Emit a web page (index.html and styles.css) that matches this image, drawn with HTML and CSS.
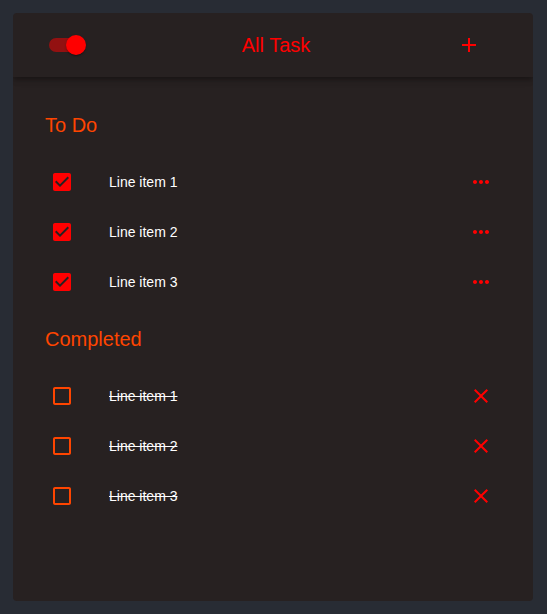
FILE: index.html
```html
<!DOCTYPE html>
<html lang="en">
<head>
<meta charset="utf-8">
<title>All Task</title>
<link rel="stylesheet" href="styles.css">
</head>
<body>
<div class="card">
  <header class="bar">
    <div class="switch"><span class="knob"></span></div>
    <div class="title">All Task</div>
    <svg class="icon red add" viewBox="0 0 24 24"><path d="M19 13h-6v6h-2v-6H5v-2h6V5h2v6h6v2z"/></svg>
  </header>
  <main class="content">
    <section class="section">
      <h2 class="heading">To Do</h2>
      <div class="row">
        <svg class="icon red" viewBox="0 0 24 24"><path d="M19 3H5c-1.11 0-2 .9-2 2v14c0 1.1.89 2 2 2h14c1.110 0 2-.9 2-2V5c0-1.1-.89-2-2-2zm-9 14l-5-5 1.41-1.41L10 14.170l7.59-7.59L19 8l-9 9z"/></svg>
        <span class="label">Line item 1</span>
        <svg class="icon red" viewBox="0 0 24 24"><path d="M6 10c-1.1 0-2 .9-2 2s.9 2 2 2 2-.9 2-2-.9-2-2-2zm12 0c-1.1 0-2 .9-2 2s.9 2 2 2 2-.9 2-2-.9-2-2-2zm-6 0c-1.1 0-2 .9-2 2s.9 2 2 2 2-.9 2-2-.9-2-2-2z"/></svg>
      </div>
      <div class="row">
        <svg class="icon red" viewBox="0 0 24 24"><path d="M19 3H5c-1.11 0-2 .9-2 2v14c0 1.1.89 2 2 2h14c1.11 0 2-.9 2-2V5c0-1.1-.89-2-2-2zm-9 14l-5-5 1.41-1.41L10 14.17l7.59-7.59L19 8l-9 9z"/></svg>
        <span class="label">Line item 2</span>
        <svg class="icon red" viewBox="0 0 24 24"><path d="M6 10c-1.1 0-2 .9-2 2s.9 2 2 2 2-.9 2-2-.9-2-2-2zm12 0c-1.1 0-2 .9-2 2s.9 2 2 2 2-.9 2-2-.9-2-2-2zm-6 0c-1.1 0-2 .9-2 2s.9 2 2 2 2-.9 2-2-.9-2-2-2z"/></svg>
      </div>
      <div class="row">
        <svg class="icon red" viewBox="0 0 24 24"><path d="M19 3H5c-1.11 0-2 .9-2 2v14c0 1.1.89 2 2 2h14c1.11 0 2-.9 2-2V5c0-1.1-.89-2-2-2zm-9 14l-5-5 1.41-1.41L10 14.17l7.59-7.59L19 8l-9 9z"/></svg>
        <span class="label">Line item 3</span>
        <svg class="icon red" viewBox="0 0 24 24"><path d="M6 10c-1.1 0-2 .9-2 2s.9 2 2 2 2-.9 2-2-.9-2-2-2zm12 0c-1.1 0-2 .9-2 2s.9 2 2 2 2-.9 2-2-.9-2-2-2zm-6 0c-1.1 0-2 .9-2 2s.9 2 2 2 2-.9 2-2-.9-2-2-2z"/></svg>
      </div>
    </section>
    <section class="section">
      <h2 class="heading">Completed</h2>
      <div class="row">
        <svg class="icon orange" viewBox="0 0 24 24"><path d="M19 5v14H5V5h14m0-2H5c-1.1 0-2 .9-2 2v14c0 1.1.9 2 2 2h14c1.1 0 2-.9 2-2V5c0-1.1-.9-2-2-2z"/></svg>
        <span class="label done">Line item 1</span>
        <svg class="icon red" viewBox="0 0 24 24"><path d="M19 6.41L17.59 5 12 10.59 6.41 5 5 6.41 10.59 12 5 17.59 6.41 19 12 13.41 17.59 19 19 17.59 13.41 12z"/></svg>
      </div>
      <div class="row">
        <svg class="icon orange" viewBox="0 0 24 24"><path d="M19 5v14H5V5h14m0-2H5c-1.1 0-2 .9-2 2v14c0 1.1.9 2 2 2h14c1.1 0 2-.9 2-2V5c0-1.1-.9-2-2-2z"/></svg>
        <span class="label done">Line item 2</span>
        <svg class="icon red" viewBox="0 0 24 24"><path d="M19 6.41L17.59 5 12 10.59 6.41 5 5 6.41 10.59 12 5 17.59 6.41 19 12 13.41 17.59 19 19 17.59 13.41 12z"/></svg>
      </div>
      <div class="row">
        <svg class="icon orange" viewBox="0 0 24 24"><path d="M19 5v14H5V5h14m0-2H5c-1.1 0-2 .9-2 2v14c0 1.1.9 2 2 2h14c1.1 0 2-.9 2-2V5c0-1.1-.9-2-2-2z"/></svg>
        <span class="label done">Line item 3</span>
        <svg class="icon red" viewBox="0 0 24 24"><path d="M19 6.41L17.59 5 12 10.59 6.41 5 5 6.41 10.59 12 5 17.59 6.41 19 12 13.41 17.59 19 19 17.59 13.41 12z"/></svg>
      </div>
    </section>
  </main>
</div>
</body>
</html>
```
FILE: styles.css
```css
html, body {
  margin: 0;
  padding: 0;
}
body {
  background: #282c34;
  padding: 13px 14px 13px 13px;
  font-family: "Liberation Sans", Arial, sans-serif;
}
.card {
  background: #272121;
  height: 588px;
  border-radius: 4px;
  overflow: hidden;
  display: flex;
  flex-direction: column;
}
.bar {
  height: 64px;
  flex: none;
  display: flex;
  align-items: center;
  padding: 0 40px 0 36px;
  position: relative;
  z-index: 1;
  box-shadow: 0 2px 4px -1px rgba(0,0,0,0.2), 0 4px 5px 0 rgba(0,0,0,0.14), 0 1px 10px 0 rgba(0,0,0,0.12);
}
.switch {
  width: 34px;
  height: 14px;
  border-radius: 7px;
  background: #931111;
  position: relative;
  flex: none;
}
.knob {
  position: absolute;
  left: 17px;
  top: -3px;
  width: 20px;
  height: 20px;
  border-radius: 50%;
  background: #ff0000;
  box-shadow: 0 2px 1px -1px rgba(0,0,0,0.2), 0 1px 1px 0 rgba(0,0,0,0.14), 0 1px 3px 0 rgba(0,0,0,0.12);
}
.title {
  flex: 1;
  text-align: center;
  padding-left: 12px;
  color: #ff0000;
  font-size: 20px;
  line-height: 24px;
}
.icon {
  width: 24px;
  height: 24px;
  flex: none;
  display: block;
}
.add {
  margin-right: 12px;
}
.red { fill: #ff0000; }
.orange { fill: #ff4500; }
.content {
  padding: 36px 40px 0 32px;
  display: flex;
  flex-direction: column;
  gap: 20px;
}
.heading {
  margin: 0 0 20px 0;
  font-weight: normal;
  font-size: 20px;
  line-height: 24px;
  color: #ff4500;
}
.row {
  height: 50px;
  display: flex;
  align-items: center;
  padding-left: 5px;
}
.label {
  flex: 1;
  margin-left: 35px;
  color: #ffffff;
  font-size: 14px;
  line-height: 20px;
}
.done {
  text-decoration: line-through;
}
```
